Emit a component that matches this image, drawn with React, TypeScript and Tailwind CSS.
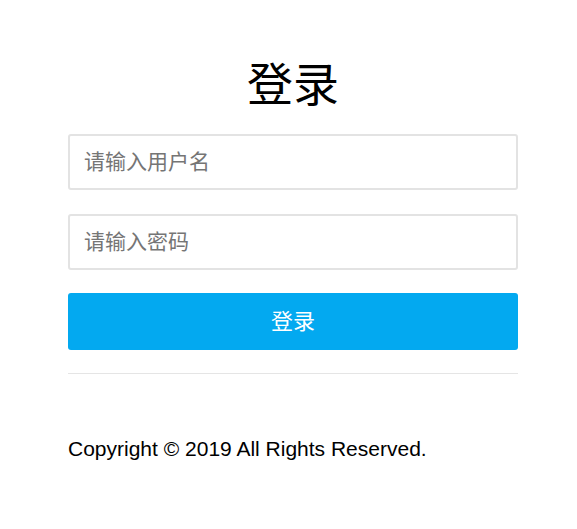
export default function App() {
  return (
    <div className="min-h-screen bg-white pl-[68px] font-['Liberation_Sans','Noto_Sans_CJK_SC',sans-serif]">
      <div className="w-[450px] pt-[51px]">
        <h1 className="text-center text-[46px] font-normal leading-[68px] text-black">登录</h1>
        <form className="mt-[15px] flex flex-col" onSubmit={(e) => e.preventDefault()}>
          <input
            type="text"
            placeholder="请输入用户名"
            className="h-[56px] w-full rounded-[3px] border-2 border-[#e3e3e3] px-[14px] text-[21px] text-black outline-none placeholder:text-[#757575]"
          />
          <input
            type="password"
            placeholder="请输入密码"
            className="mt-6 h-[56px] w-full rounded-[3px] border-2 border-[#e3e3e3] px-[14px] text-[21px] text-black outline-none placeholder:text-[#757575]"
          />
          <button
            type="submit"
            className="mt-[23px] h-[57px] w-full rounded-[3px] bg-[#03a9f0] text-[22px] text-white"
          >
            登录
          </button>
        </form>
        <hr className="mt-[23px] border-t border-[#e5e5e5]" />
        <p className="mt-[60px] text-[21px] leading-[30px] text-black">Copyright © 2019 All Rights Reserved.</p>
      </div>
    </div>
  );
}
